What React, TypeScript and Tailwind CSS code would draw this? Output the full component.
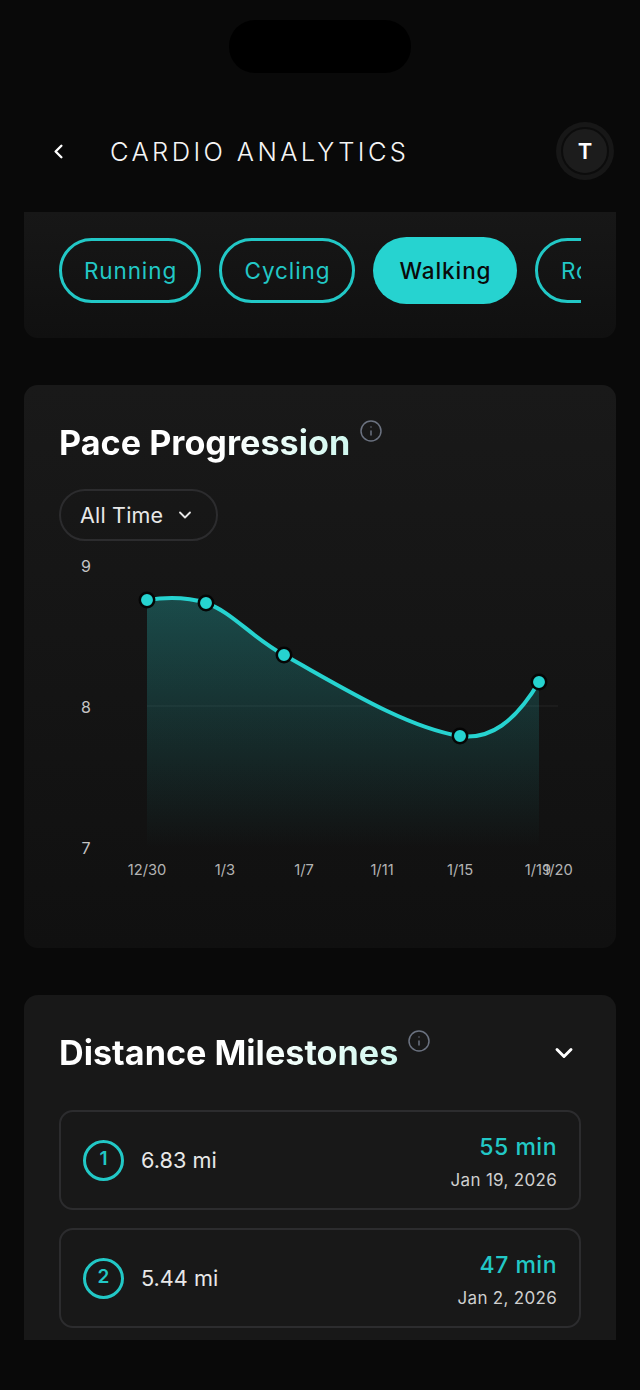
import { ChevronDown, ChevronLeft, Info } from "lucide-react";

const points = [
  [147, 600],
  [206, 603],
  [284, 655],
  [460, 736],
  [539, 682],
];

const xLabels = [
  { x: 147, label: "12/30" },
  { x: 225, label: "1/3" },
  { x: 304, label: "1/7" },
  { x: 382, label: "1/11" },
  { x: 460, label: "1/15" },
  { x: 538, label: "1/19" },
  { x: 558, label: "1/20" },
];

const yLabels = [
  { y: 566, label: "9" },
  { y: 707, label: "8" },
  { y: 848, label: "7" },
];

const curve =
  "M147 600 C167 597 187 597 206 603 C232 612 250 636 284 655 C340 686 405 727 460 736 C490 740 515 722 539 682";

function PaceChart() {
  return (
    <svg viewBox="59 555 522 330" className="mt-[14px] block h-[330px] w-[522px]">
      <defs>
        <linearGradient id="paceFill" x1="0" y1="600" x2="0" y2="848" gradientUnits="userSpaceOnUse">
          <stop offset="0" stopColor="#26d3d0" stopOpacity="0.28" />
          <stop offset="1" stopColor="#26d3d0" stopOpacity="0" />
        </linearGradient>
      </defs>
      <path d="M147 706 H558" stroke="#ffffff" strokeOpacity="0.07" strokeWidth="1" />
      <path d={`${curve} V848 H147 Z`} fill="url(#paceFill)" />
      <path d={curve} fill="none" stroke="#26d3d0" strokeWidth="4" strokeLinecap="round" />
      {points.map(([x, y]) => (
        <circle key={x} cx={x} cy={y} r="7.2" fill="#26d3d0" stroke="#050505" strokeWidth="2.5" />
      ))}
      {yLabels.map((t) => (
        <text key={t.label} x="86" y={t.y} dy="5.5" textAnchor="middle" fontSize="16" fill="#c4c4c4">
          {t.label}
        </text>
      ))}
      {xLabels.map((t) => (
        <text key={t.label} x={t.x} y="875" textAnchor="middle" fontSize="14.7" fill="#b4b4b4">
          {t.label}
        </text>
      ))}
    </svg>
  );
}

function CardTitle({ title }: { title: string }) {
  return (
    <div className="flex items-start">
      <h2 className="mt-[1px] bg-gradient-to-r from-white from-55% to-[#d0f8ef] bg-clip-text text-[34.2px] leading-[40px] font-bold text-transparent">
        {title}
      </h2>
      <Info className="mt-[-3px] ml-[9px] h-[24px] w-[24px] text-[#6b7280]" strokeWidth={1.5} />
    </div>
  );
}

function Milestone({ rank, distance, time, date }: { rank: number; distance: string; time: string; date: string }) {
  return (
    <div className="flex h-[100px] items-center rounded-[14px] border-2 border-[#2c2c2e] pr-[22px] pl-[22px]">
      <div className="flex h-[41px] w-[41px] items-center justify-center rounded-full border-[3px] border-[#22c8c6] pb-[1px] text-[19px] font-semibold text-[#22c8c6]">
        {rank}
      </div>
      <span className="ml-[17px] text-[21.7px] text-[#e8e8e8]">{distance}</span>
      <div className="ml-auto flex flex-col items-end pt-[4px]">
        <span className="text-[23px] leading-[30px] font-medium tracking-[0.5px] text-[#22c8c6]">{time}</span>
        <span className="mt-[6px] text-[17px] leading-[24px] tracking-[0.3px] text-[#cfcfcf]">{date}</span>
      </div>
    </div>
  );
}

export default function App() {
  return (
    <div className="relative h-[1390px] w-[640px] overflow-hidden bg-[#090909] font-['Inter',sans-serif]">
      <div className="absolute top-[20px] left-[229px] h-[53px] w-[182px] rounded-[26px] bg-black" />

      <header className="flex h-[212px] items-start pt-[122px] pr-[26px] pl-[47px]">
        <ChevronLeft className="mt-[18px] h-[23px] w-[23px] text-white" strokeWidth={2.5} />
        <h1 className="mt-[14px] ml-[40px] text-[25.5px] leading-[32px] font-[350] tracking-[3.4px] text-[#f5f5f5]">
          CARDIO ANALYTICS
        </h1>
        <div className="ml-auto flex h-[58px] w-[58px] items-center justify-center rounded-full bg-[#171717]">
          <div className="flex h-[48px] w-[48px] items-center justify-center rounded-full border-2 border-[#0c0c0c] bg-[#1c1c1c] text-[22px] font-semibold text-white">
            T
          </div>
        </div>
      </header>

      <section className="mx-[24px] h-[126px] rounded-b-[14px] bg-gradient-to-b from-[#171717] to-[#101010] pt-[25px] pl-[35px]">
        <div className="flex w-[522px] items-center gap-[18px] overflow-hidden text-[22.5px] tracking-[0.9px]">
          <div className="flex h-[65px] w-[142px] shrink-0 items-center justify-center rounded-full border-[3px] border-[#22c8c6] pl-[1px] text-[#22c8c6]">
            Running
          </div>
          <div className="flex h-[65px] w-[136px] shrink-0 items-center justify-center rounded-full border-[3px] border-[#22c8c6] pl-[1px] text-[#22c8c6]">
            Cycling
          </div>
          <div className="flex h-[67px] w-[144px] shrink-0 items-center justify-center rounded-full bg-[#26d3d0] pl-[1px] font-medium text-[#0a0a0a]">
            Walking
          </div>
          <div className="flex h-[65px] w-[120px] shrink-0 items-center rounded-full border-[3px] border-[#22c8c6] pl-[23px] text-[#22c8c6]">
            Rowing
          </div>
        </div>
      </section>

      <section className="mx-[24px] mt-[47px] h-[563px] rounded-[14px] bg-gradient-to-b from-[#191919] to-[#101010] px-[35px] pt-[37px]">
        <CardTitle title="Pace Progression" />
        <button className="mt-[26px] flex h-[52px] w-[159px] items-center rounded-full border-2 border-[#2c2c2e] pl-[19px] text-[21.5px] tracking-[0.2px] text-[#e8e8e8]">
          All Time
          <ChevronDown className="ml-[12px] h-[20px] w-[20px]" strokeWidth={2.2} />
        </button>
        <PaceChart />
      </section>

      <section className="mx-[24px] mt-[47px] h-[345px] rounded-t-[14px] bg-[#181818] px-[35px] pt-[37px]">
        <div className="flex items-start justify-between">
          <CardTitle title="Distance Milestones" />
          <ChevronDown className="mt-[7px] mr-[3px] h-[28px] w-[28px] text-white" strokeWidth={2.5} />
        </div>
        <div className="mt-[37px] flex flex-col gap-[18px]">
          <Milestone rank={1} distance="6.83 mi" time="55 min" date="Jan 19, 2026" />
          <Milestone rank={2} distance="5.44 mi" time="47 min" date="Jan 2, 2026" />
        </div>
      </section>
    </div>
  );
}
